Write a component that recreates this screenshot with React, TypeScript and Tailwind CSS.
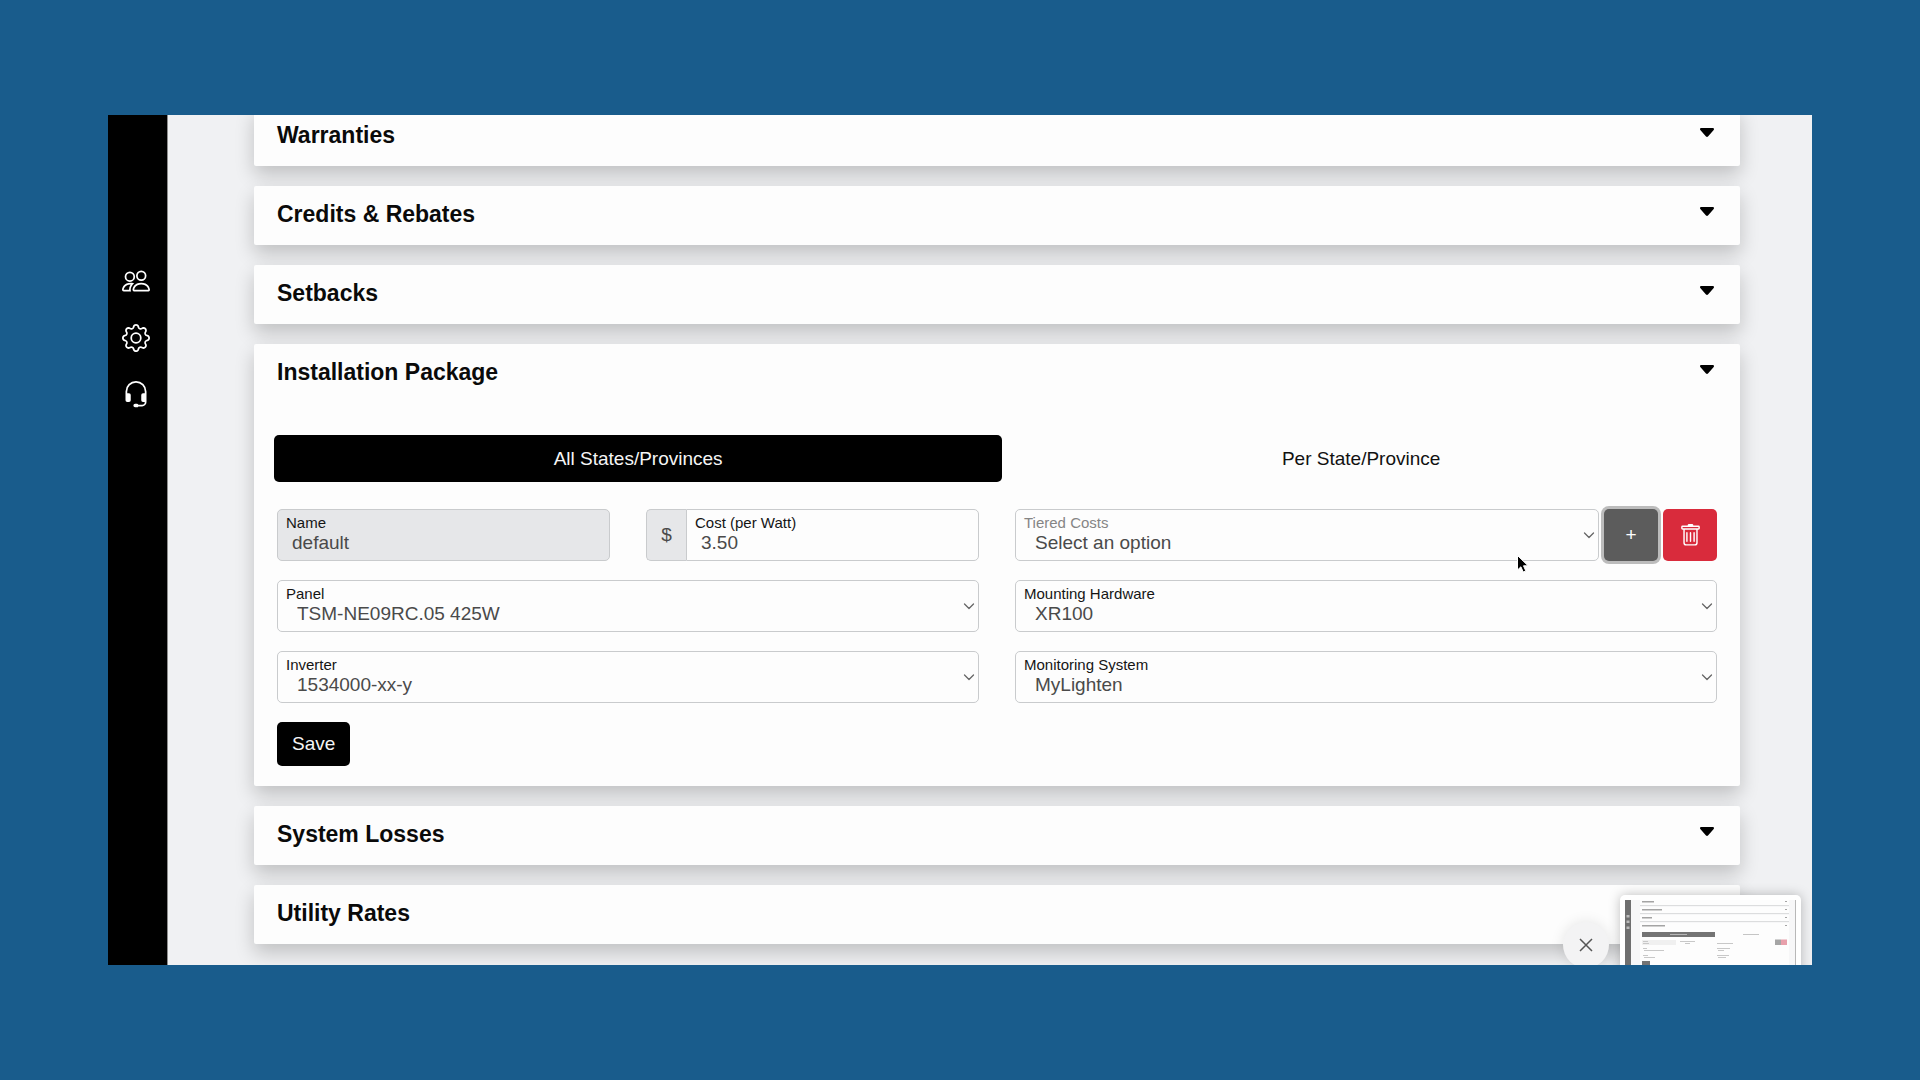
import { useState } from "react";
import type { ReactNode } from "react";
import { BsGear, BsHeadset, BsPeople, BsTrash } from "react-icons/bs";

const fieldClass =
  "w-full h-[52px] rounded-[5px] border border-[#c9cbcd] pt-[21px] pb-[5px] text-[19px] leading-6 text-[#4a4a4a] focus:outline-none";

function Caret() {
  return (
    <svg width="14" height="9" viewBox="0 0 14 9" fill="#000">
      <path d="M1.2 0h11.6c1 0 1.5 1.1.9 1.9L8 8.5c-.5.6-1.5.6-2 0L.3 1.9C-.3 1.1.2 0 1.2 0z" />
    </svg>
  );
}

function Section({ title, children }: { title: string; children?: ReactNode }) {
  return (
    <section className="rounded-[2px] bg-[#fdfdfd] shadow-[0_9px_19px_rgba(0,0,0,0.2)]">
      <button
        type="button"
        className="flex h-[59px] w-full items-start justify-between pl-[23px] pr-[26px] text-left"
      >
        <span className="pt-[14px] text-[23px] leading-7 font-bold text-[#0a0a0a]">
          {title}
        </span>
        <span className="pt-[21px]">
          <Caret />
        </span>
      </button>
      {children}
    </section>
  );
}

function FieldLabel({ id, label, muted }: { id: string; label: string; muted?: boolean }) {
  return (
    <label
      htmlFor={id}
      className={`absolute top-[5px] left-[9px] text-[15px] leading-[18px] ${
        muted ? "text-[#858585]" : "text-[#151515]"
      }`}
    >
      {label}
    </label>
  );
}

function SelectField({
  id,
  label,
  options,
  muted,
}: {
  id: string;
  label: string;
  options: string[];
  muted?: boolean;
}) {
  return (
    <div className="relative min-w-0 flex-1">
      <select id={id} className={`${fieldClass} appearance-none pl-[19px] pr-6`}>
        {options.map((option) => (
          <option key={option}>{option}</option>
        ))}
      </select>
      <FieldLabel id={id} label={label} muted={muted} />
      <svg
        className="pointer-events-none absolute top-[23px] right-1"
        width="12"
        height="7"
        viewBox="0 0 12 7"
        fill="none"
        stroke="#666"
        strokeWidth="1.3"
        strokeLinecap="round"
        strokeLinejoin="round"
      >
        <path d="M1.5 1 6 5.500 10.500 1" />
      </svg>
    </div>
  );
}

function Sidebar() {
  const links = [
    { label: "Customers", Icon: BsPeople },
    { label: "Settings", Icon: BsGear },
    { label: "Support", Icon: BsHeadset },
  ];

  return (
    <nav className="flex w-[60px] shrink-0 flex-col items-center gap-[29px] border-r border-[#8d8d8d] bg-black pt-[152px] pr-1 text-white">
      {links.map(({ label, Icon }) => (
        <a key={label} href="#" aria-label={label}>
          <Icon size={28} />
        </a>
      ))}
    </nav>
  );
}

function InstallationForm() {
  const [perState, setPerState] = useState(false);
  const active = "bg-black text-[#f5f5f5]";

  return (
    <div className="px-[23px] pt-8 pb-5">
      <div className="-mx-[3px] mb-[27px] flex h-[47px] text-[19px]">
        <button
          type="button"
          onClick={() => setPerState(false)}
          className={`flex-auto rounded-[5px] pt-[2px] ${perState ? "" : active}`}
        >
          All States/Provinces
        </button>
        <button
          type="button"
          onClick={() => setPerState(true)}
          className={`flex-auto rounded-[5px] pt-[2px] ${perState ? active : "text-[#111]"}`}
        >
          Per State/Province
        </button>
      </div>

      <form onSubmit={(e) => e.preventDefault()}>
        <div className="grid grid-cols-2 gap-x-9 gap-y-[19px]">
          <div className="grid grid-cols-2 gap-9">
            <div className="relative">
              <input
                id="name"
                defaultValue="default"
                readOnly
                className={`${fieldClass} bg-[#e6e7e9] pl-[14px]`}
              />
              <FieldLabel id="name" label="Name" />
            </div>
            <div className="flex">
              <span className="flex w-10 shrink-0 items-center justify-center rounded-l-[5px] border border-r-0 border-[#c9cbcd] bg-[#e6e7e9] text-[19px] text-[#4a4a4a]">
                $
              </span>
              <div className="relative min-w-0 flex-1">
                <input
                  id="cost"
                  defaultValue="3.50"
                  className={`${fieldClass} rounded-l-none pl-[14px]`}
                />
                <FieldLabel id="cost" label="Cost (per Watt)" />
              </div>
            </div>
          </div>
          <div className="flex gap-[5px]">
            <SelectField id="tiered" label="Tiered Costs" options={["Select an option"]} muted />
            <button
              type="button"
              aria-label="Add tiered cost"
              className="h-[52px] w-[54px] rounded-[5px] bg-[#5c5c5c] text-[19px] text-white shadow-[0_0_0_3px_#bcbcbc]"
            >
              +
            </button>
            <button
              type="button"
              aria-label="Delete"
              className="flex h-[52px] w-[54px] items-center justify-center rounded-[5px] bg-[#d92b3c] text-white"
            >
              <BsTrash size={23} />
            </button>
          </div>
          <SelectField id="panel" label="Panel" options={["TSM-NE09RC.05 425W"]} />
          <SelectField id="mounting" label="Mounting Hardware" options={["XR100"]} />
          <SelectField id="inverter" label="Inverter" options={["1534000-xx-y"]} />
          <SelectField id="monitoring" label="Monitoring System" options={["MyLighten"]} />
        </div>
        <button
          type="submit"
          className="mt-[19px] h-11 rounded-[5px] bg-black px-[15px] text-[19px] text-[#f5f5f5]"
        >
          Save
        </button>
      </form>
    </div>
  );
}

// Small preview of the page in the bottom corner
function Preview() {
  return (
    <svg width="171" height="72" viewBox="0 0 171 72">
      <rect width="171" height="72" fill="#f7f7f8" />
      <rect width="6" height="72" fill="#6f6f6f" />
      <g fill="#bbb">
        <rect x="1.500" y="15" width="3" height="2.500" />
        <rect x="1.500" y="20.500" width="3" height="2.500" />
        <rect x="1.500" y="26.500" width="3" height="2.500" />
      </g>
      <g fill="#fdfdfd">
        <rect x="15" y="0" width="149" height="5" />
        <rect x="15" y="7" width="149" height="6" />
        <rect x="15" y="15" width="149" height="6" />
        <rect x="15" y="23" width="149" height="49" />
      </g>
      <g fill="#dcddde">
        <rect x="15" y="5" width="149" height="1" />
        <rect x="15" y="13" width="149" height="1" />
        <rect x="15" y="21" width="149" height="1" />
      </g>
      <g fill="#a4a4a4">
        <rect x="17" y="1" width="12" height="1.500" />
        <rect x="17" y="9" width="20" height="1.500" />
        <rect x="17" y="17" width="10" height="1.500" />
        <rect x="17" y="25" width="23" height="1.500" />
        <rect x="160" y="1" width="2" height="1" />
        <rect x="160" y="9" width="2" height="1" />
        <rect x="160" y="17" width="2" height="1" />
        <rect x="160" y="25" width="2" height="1" />
      </g>
      <rect x="17" y="32" width="73" height="5" fill="#747474" />
      <rect x="45" y="34" width="17" height="1" fill="#b5b5b5" />
      <rect x="118" y="34" width="16" height="1" fill="#c5c5c5" />
      <rect x="17" y="40" width="34" height="5" fill="#f0f0f0" />
      <g fill="#c8c8c8">
        <rect x="18" y="41" width="5" height="1" />
        <rect x="18" y="43" width="6" height="1" />
        <rect x="55" y="41" width="15" height="1" />
        <rect x="60" y="43" width="5" height="1" />
        <rect x="92" y="43" width="16" height="1" />
        <rect x="18" y="48" width="4" height="1" />
        <rect x="19" y="50" width="20" height="1" />
        <rect x="92" y="48" width="13" height="1" />
        <rect x="93" y="50" width="6" height="1" />
        <rect x="18" y="55" width="5" height="1" />
        <rect x="19" y="57" width="11" height="1" />
        <rect x="92" y="55" width="12" height="1" />
        <rect x="93" y="57" width="8" height="1" />
      </g>
      <rect x="150" y="39.500" width="6" height="5.500" fill="#a5a5a5" />
      <rect x="156" y="39.500" width="6" height="5.500" fill="#e8a0ab" />
      <rect x="17" y="61" width="8" height="5" fill="#747474" />
      <rect x="170" width="1" height="72" fill="#b8b8b8" />
    </svg>
  );
}

export default function App() {
  return (
    <div className="flex h-screen bg-[#195c8c] px-[108px] py-[115px] font-['Liberation_Sans',Arial,sans-serif]">
      <div className="relative flex flex-1 overflow-hidden bg-[#f0f1f3]">
        <Sidebar />
        <main className="-mt-2 flex min-w-0 flex-1 flex-col gap-5 pr-[72px] pl-[86px]">
          <Section title="Warranties" />
          <Section title="Credits & Rebates" />
          <Section title="Setbacks" />
          <Section title="Installation Package">
            <InstallationForm />
          </Section>
          <Section title="System Losses" />
          <Section title="Utility Rates" />
        </main>

        <button
          type="button"
          aria-label="Dismiss preview"
          className="absolute right-[203px] -bottom-[3px] flex size-[46px] items-center justify-center rounded-full bg-[#f3f3f4] shadow-[0_0_14px_rgba(0,0,0,0.1)]"
        >
          <svg width="14" height="14" viewBox="0 0 14 14" stroke="#555" strokeWidth="1.5">
            <path d="M1 1l12 12M13 1L1 13" />
          </svg>
        </button>
        <div className="absolute right-[11px] -bottom-3 rounded-[5px] bg-white p-[5px] shadow-[0_0_12px_rgba(0,0,0,0.25)]">
          <Preview />
        </div>

        <svg
          className="absolute top-[439px] left-[1408px]"
          width="14"
          height="20"
          viewBox="0 0 14 20"
        >
          <path
            d="M1.500 1.500v14.500l3.400-3.200 2.300 5.200 2.600-1.100-2.300-5.100h4.600z"
            fill="#000"
            stroke="#fff"
            strokeWidth="1"
          />
        </svg>
      </div>
    </div>
  );
}
